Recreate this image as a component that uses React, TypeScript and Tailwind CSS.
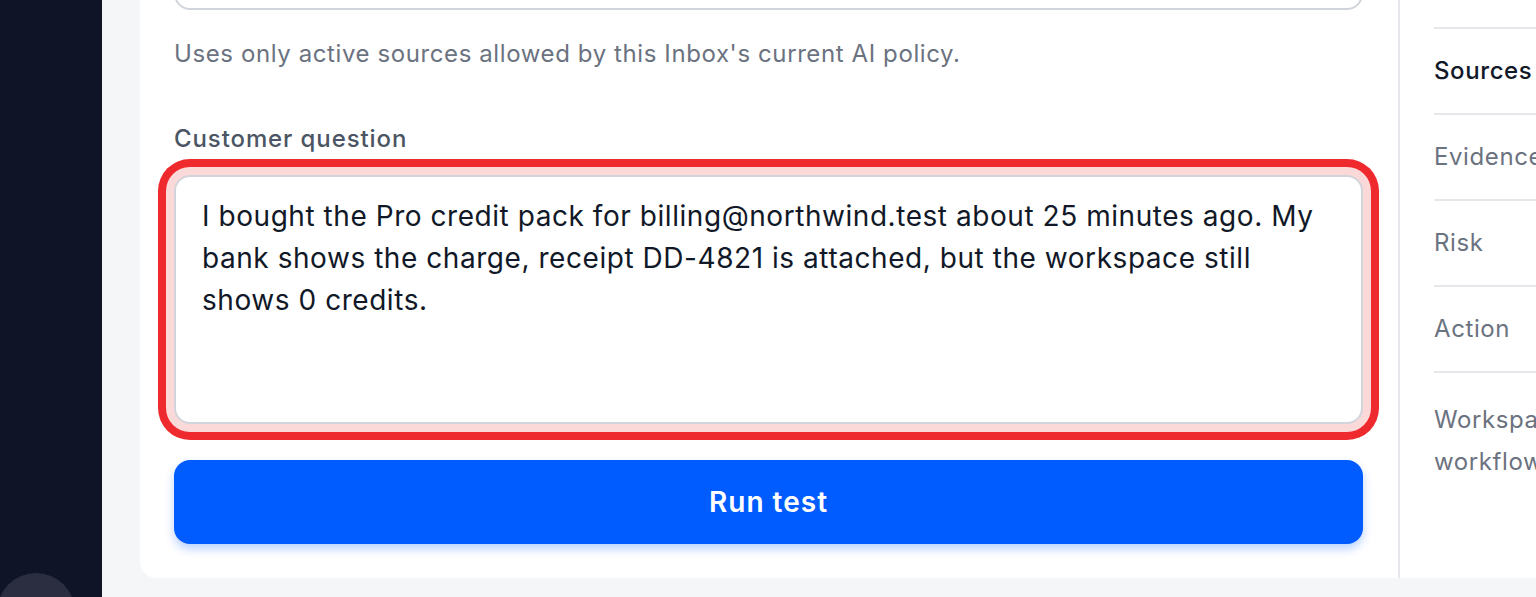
// Test console — question composer with focused textarea and a section list on the right.

const SECTIONS: ReadonlyArray<{ label: string; active?: boolean }> = [
  { label: 'Sources', active: true },
  { label: 'Evidence' },
  { label: 'Risk' },
  { label: 'Action' },
];

const QUESTION =
  'I bought the Pro credit pack for billing@northwind.test about 25 minutes ago. My bank shows the charge, receipt DD-4821 is attached, but the workspace still shows 0 credits.';

function Sidebar() {
  return (
    <aside className="w-[102px] shrink-0 h-full bg-[#0f1526] flex flex-col justify-end overflow-hidden">
      <div className="w-[78px] h-[78px] rounded-full bg-[#2a2e40] -ml-[3px] -mb-[54px]" />
    </aside>
  );
}

function Composer() {
  return (
    <section className="w-[1260px] shrink-0 border-r-2 border-[#e5e7eb] pl-[34px] pr-[35px] pb-[34px] flex flex-col">
      <div className="-mt-[50px] h-[60px] rounded-2xl border-2 border-[#d1d5db] bg-white" />
      <p className="mt-[26px] text-[24px] leading-[36px] tracking-[0.6px] text-[#6b7280]">
        Uses only active sources allowed by this Inbox's current AI policy.
      </p>
      <label className="mt-[49px] text-[24px] leading-[36px] tracking-[0.9px] font-medium text-[#4b5563]">
        Customer question
      </label>
      <textarea
        defaultValue={QUESTION}
        className="mt-[18px] h-[250px] w-full resize-none rounded-2xl border-2 border-[#d1d5db] bg-white px-[26px] py-[18px] text-[28px] leading-[42px] tracking-[0.55px] text-[#111827] outline-none shadow-[0_0_0_8px_#fcd9d9,0_0_0_16px_#ee2a2e]"
      />
      <button
        type="button"
        className="mt-[36px] h-[84px] w-full rounded-2xl bg-[#005cff] text-white text-[28px] font-semibold tracking-[1px] shadow-[0_5px_10px_rgba(0,92,255,0.28)]"
      >
        Run test
      </button>
    </section>
  );
}

function SectionList() {
  return (
    <nav className="w-[270px] shrink-0 pl-[34px] flex flex-col">
      {/* row above the fold: only its divider shows */}
      <div className="h-[29px] border-b-2 border-[#e5e7eb]" />
      {SECTIONS.map((s) => (
        <div
          key={s.label}
          className={
            s.active
              ? 'h-[86px] border-b-2 border-[#e5e7eb] flex items-center text-[24px] tracking-[0.6px] font-medium text-[#111827] whitespace-nowrap'
              : 'h-[86px] border-b-2 border-[#e5e7eb] flex items-center text-[24px] tracking-[0.6px] text-[#6b7280] whitespace-nowrap'
          }
        >
          {s.label}
        </div>
      ))}
      <div className="pt-[26px] w-[200px] text-[24px] leading-[42px] tracking-[0.6px] text-[#6b7280]">
        Workspace workflow
      </div>
    </nav>
  );
}

export default function App() {
  return (
    <div
      className="w-[1536px] h-[597px] overflow-hidden flex bg-[#f5f6f8]"
      style={{ fontFamily: 'Inter, "Noto Sans", sans-serif' }}
    >
      <Sidebar />
      <main className="flex-1 min-w-0 overflow-hidden pl-[38px] pb-[19px]">
        <div className="h-full flex bg-white rounded-bl-2xl overflow-hidden">
          <Composer />
          <SectionList />
        </div>
      </main>
    </div>
  );
}
